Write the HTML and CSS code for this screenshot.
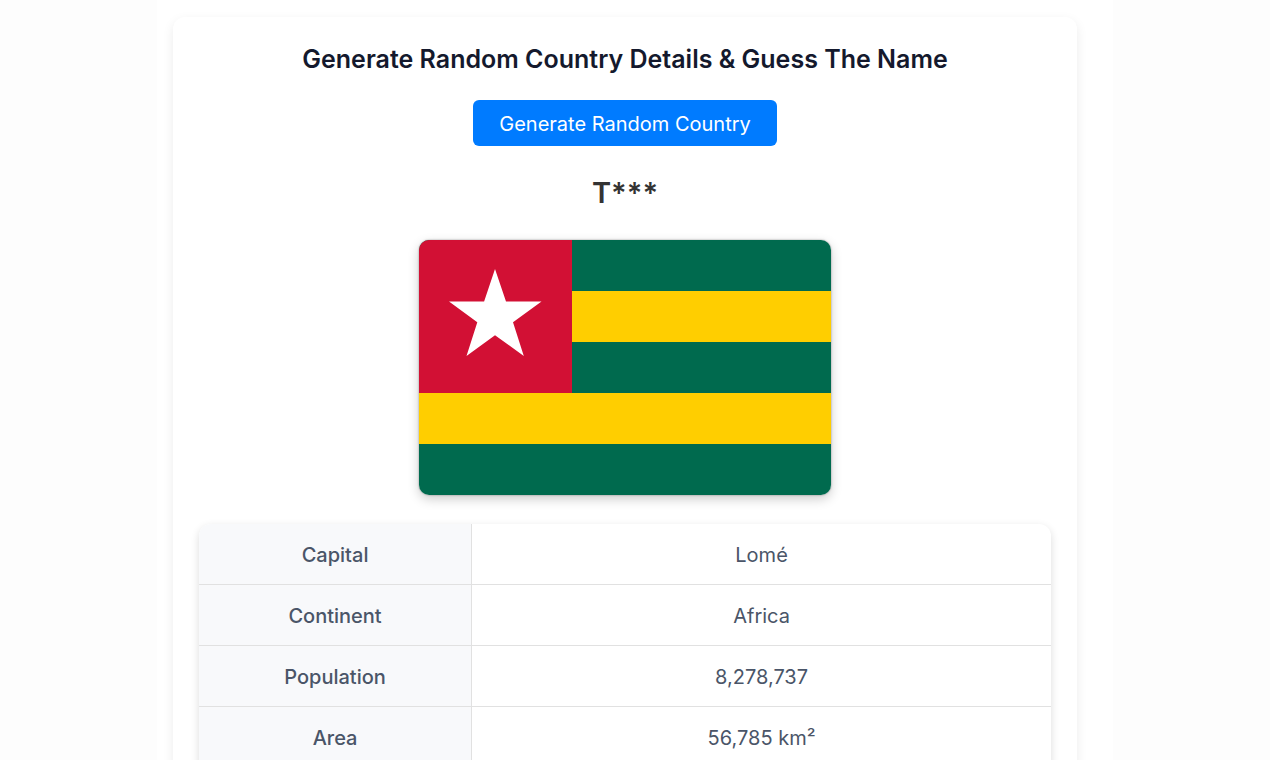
FILE: index.html
```
<!DOCTYPE html>
<html lang="en">
<head>
    <meta charset="UTF-8">
    <meta name="viewport" content="width=device-width, initial-scale=1.0">
    <title>Guess The Country</title>
    <link rel="stylesheet" href="styles.css">
</head>
<body>
    <main class="page">
        <div class="card">
            <h1>Generate Random Country Details &amp; Guess The Name</h1>
            <button type="button" class="generate-btn">Generate Random Country</button>
            <h2 class="country-name">T***</h2>
            <svg class="flag" viewBox="0 0 412 255" role="img" aria-label="Country flag">
                <rect width="412" height="255" fill="#006a4e"/>
                <rect y="51" width="412" height="51" fill="#ffce00"/>
                <rect y="153" width="412" height="51" fill="#ffce00"/>
                <rect width="153" height="153" fill="#d21034"/>
                <polygon fill="#fff" points="76,29 87,61.5 122.5,61.5 94,82.3 104.8,116 76,95.2 47.5,116 58.3,82.3 30,61.5 65.1,61.5"/>
            </svg>
            <table class="details">
                <tr>
                    <th scope="row">Capital</th>
                    <td>Lomé</td>
                </tr>
                <tr>
                    <th scope="row">Continent</th>
                    <td>Africa</td>
                </tr>
                <tr>
                    <th scope="row">Population</th>
                    <td>8,278,737</td>
                </tr>
                <tr>
                    <th scope="row">Area</th>
                    <td>56,785 km²</td>
                </tr>
            </table>
        </div>
    </main>
</body>
</html>
```
FILE: styles.css
```
* {
    box-sizing: border-box;
}
body {
    margin: 0;
    font-family: 'Inter', sans-serif;
    background-color: #fdfdfd;
}
.page {
    max-width: 956px;
    min-height: 100vh;
    margin: 0 auto;
    padding: 17px 36px 17px 16px;
    background-color: #fff;
}
.card {
    display: flex;
    flex-direction: column;
    align-items: center;
    padding: 26px;
    border-radius: 12px;
    background-color: #fff;
    box-shadow: 0 4px 12px rgba(0, 0, 0, 0.08);
    text-align: center;
}
h1 {
    margin: 0 0 24px;
    font-size: 25px;
    line-height: 33px;
    font-weight: 600;
    color: #14192d;
}
.generate-btn {
    padding: 9px 26px 7px;
    border: none;
    border-radius: 6px;
    background-color: #007bff;
    color: #fff;
    font-family: inherit;
    font-size: 20px;
    line-height: 30px;
    cursor: pointer;
}
.generate-btn:hover {
    background-color: #0056b3;
}
.country-name {
    margin: 26px 0;
    font-size: 29px;
    line-height: 42px;
    font-weight: 600;
    color: #333;
}
.flag {
    display: block;
    width: 100%;
    max-width: 412px;
    margin-bottom: 29px;
    border-radius: 10px;
    box-shadow: 0 0 2px rgba(0, 0, 0, 0.4), 0 4px 12px rgba(0, 0, 0, 0.2);
}
.details {
    width: 100%;
    border-collapse: collapse;
    border-radius: 12px 12px 0 0;
    overflow: hidden;
    box-shadow: 0 3px 8px rgba(0, 0, 0, 0.14);
    color: #4a5568;
    font-size: 20px;
    line-height: 30px;
}
.details th,
.details td {
    padding: 16px 15px 14px;
    border-bottom: 1px solid #e1e1e1;
}
.details th {
    width: 32%;
    border-right: 1px solid #e1e1e1;
    background-color: #f8f9fb;
    font-weight: 500;
}
.details tr:last-child th,
.details tr:last-child td {
    border-bottom: none;
}
```
